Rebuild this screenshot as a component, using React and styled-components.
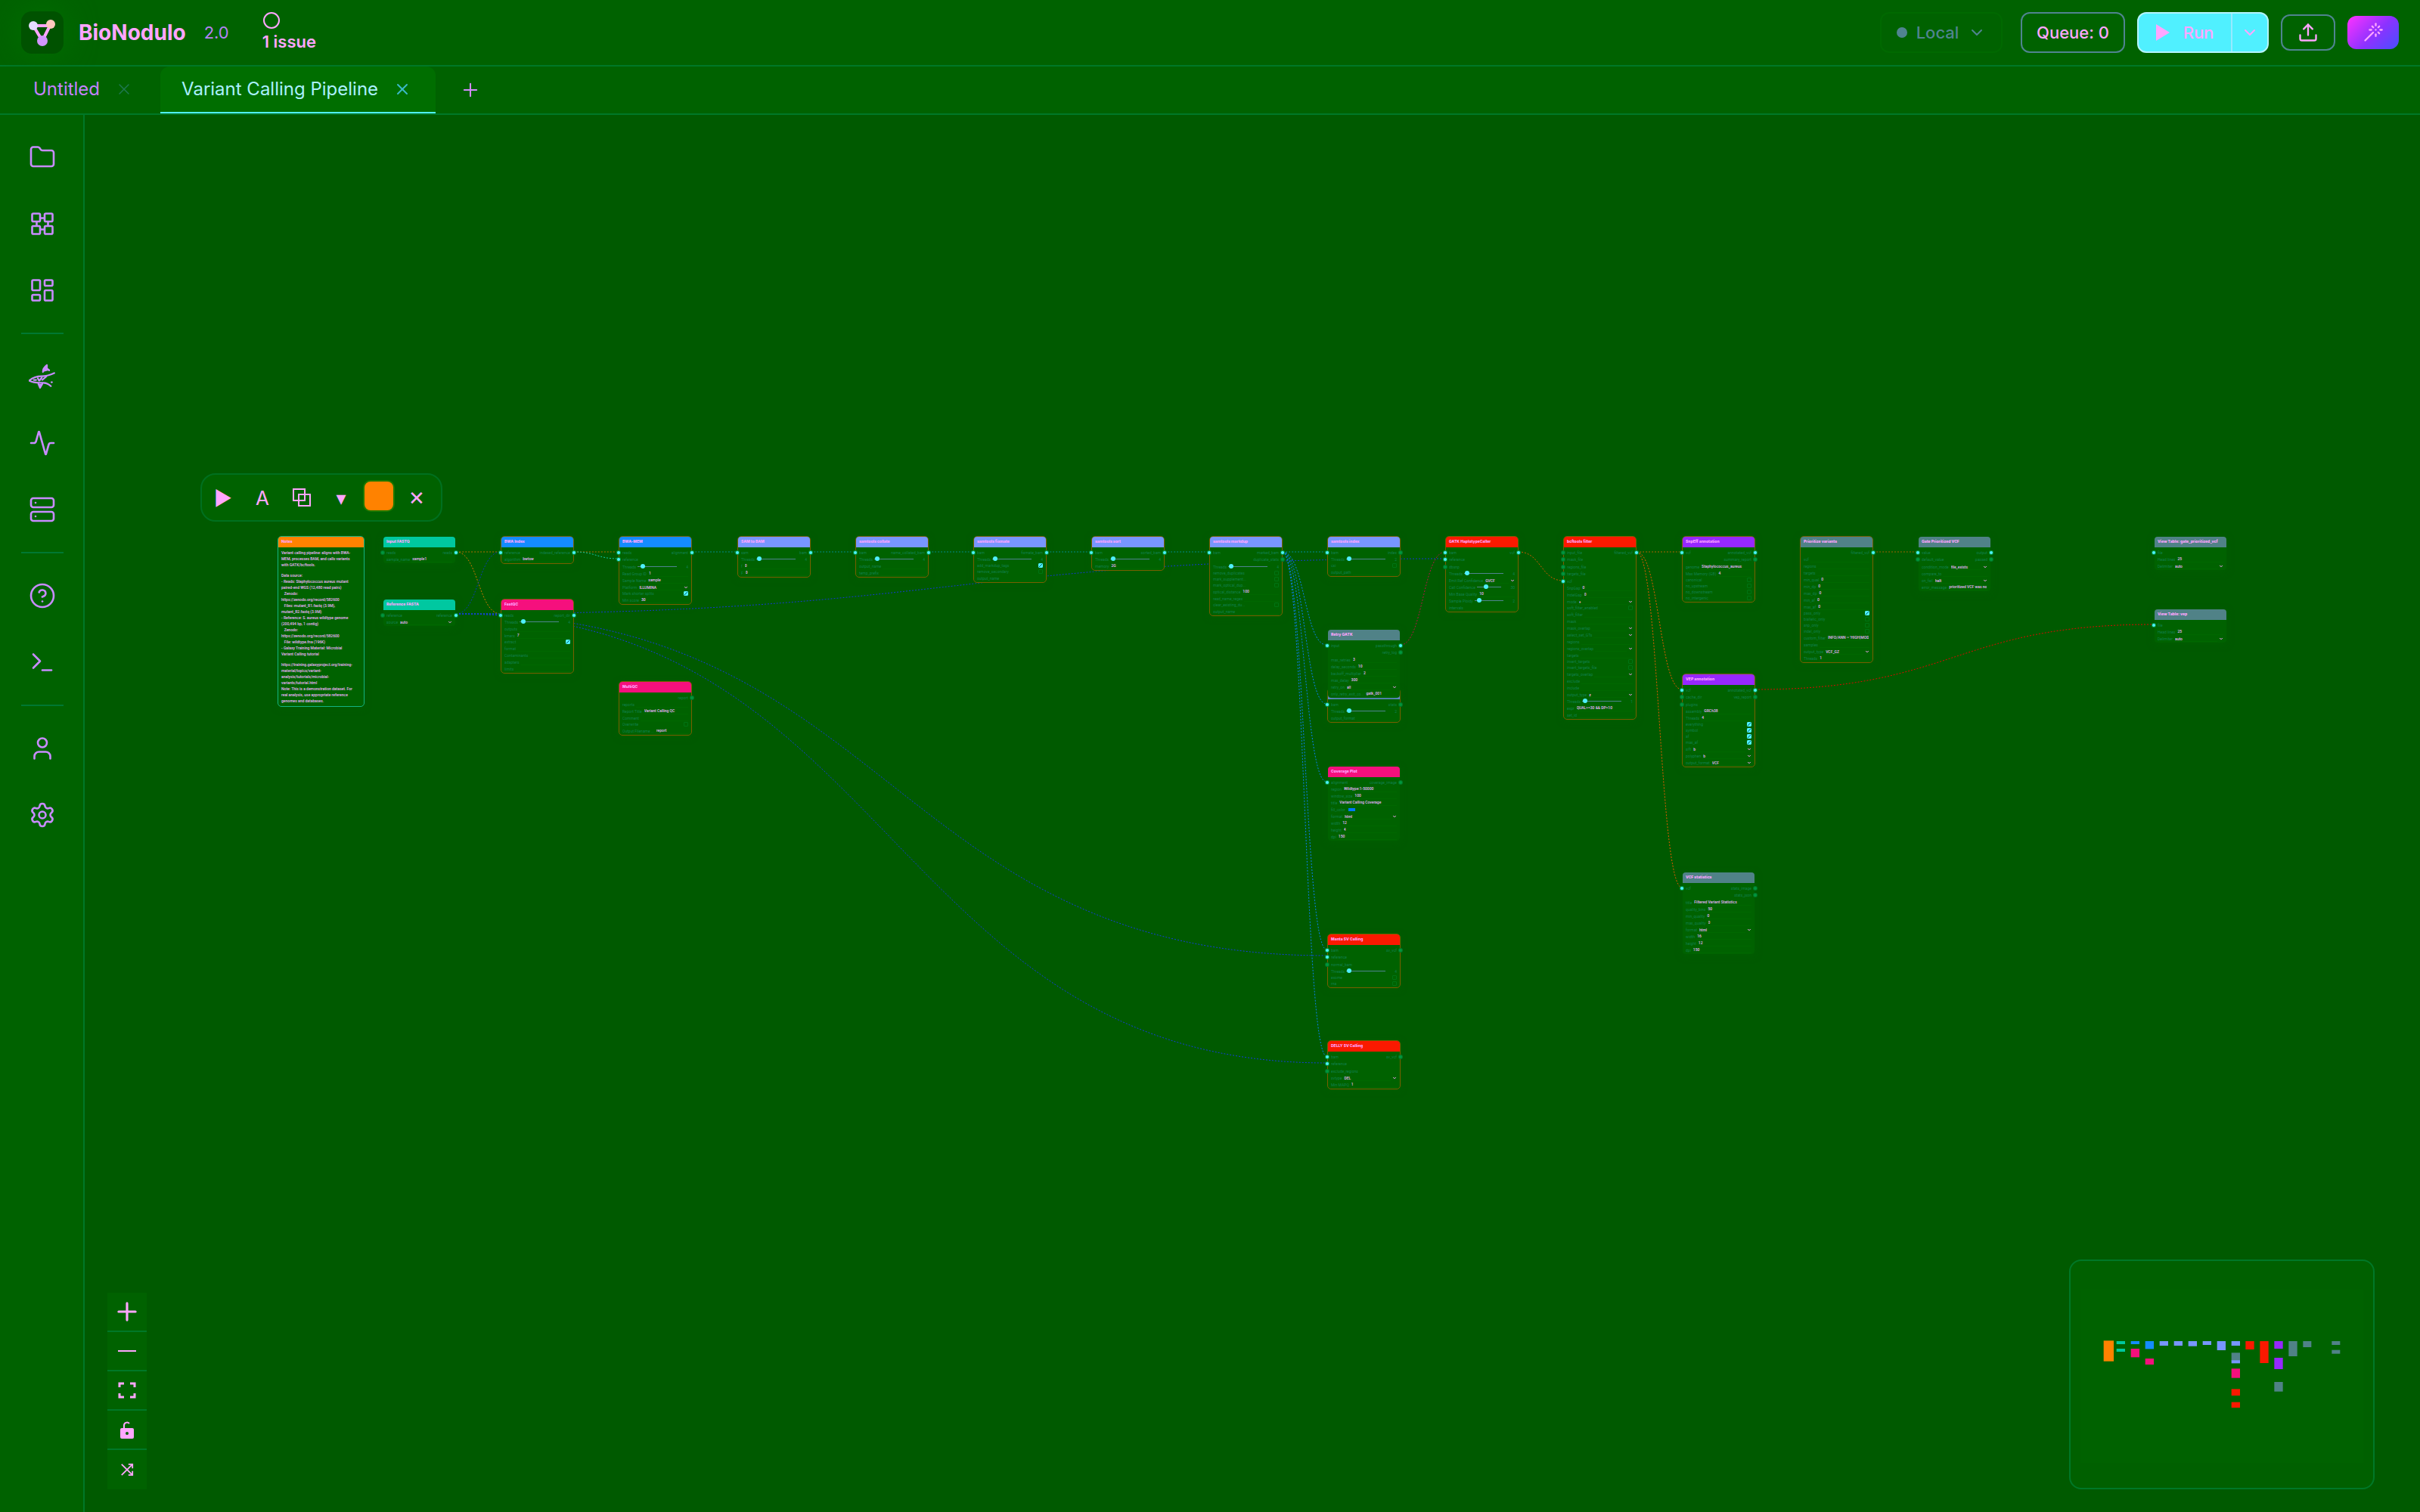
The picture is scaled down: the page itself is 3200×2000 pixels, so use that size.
import styled, { createGlobalStyle } from "styled-components";
import {
  Activity,
  ChevronDown,
  Circle,
  CircleHelp,
  Folder,
  LayoutDashboard,
  Plus,
  Server,
  Settings,
  Terminal,
  Upload,
  User,
  Wand,
  X,
} from "lucide-react";

const GlobalStyle = createGlobalStyle`
  * {
    box-sizing: border-box;
  }
  body {
    margin: 0;
    background: #005a00;
    font-family: Inter, "Liberation Sans", sans-serif;
    color: #ffa6ff;
  }
  button, input, select {
    font: inherit;
    color: inherit;
    margin: 0;
    padding: 0;
    border: 0;
    background: none;
  }
  button {
    display: flex;
    align-items: center;
    justify-content: center;
    cursor: pointer;
  }
`;

const Page = styled.div`
  display: flex;
  flex-direction: column;
  min-height: 100vh;
`;

const Header = styled.header`
  display: flex;
  align-items: center;
  height: 88px;
  padding: 0 28px;
  background: #006200;
  border-bottom: 2px solid #007828;
`;

const LogoTile = styled.div`
  width: 56px;
  height: 56px;
  border-radius: 14px;
  background: #005200;
  box-shadow: 0 0 40px #007000;
`;

const Brand = styled.h1`
  margin: 0 0 0 20px;
  font-size: 28px;
  font-weight: 700;
  line-height: 36px;
`;

const Version = styled.span`
  margin-left: 24px;
  font-size: 22px;
  line-height: 28px;
  color: #b482f5;
`;

const Issues = styled.button`
  && {
    flex-direction: column;
    align-items: flex-start;
    margin-left: 44px;
  }
  font-size: 22px;
  font-weight: 600;
  line-height: 32px;
`;

const Actions = styled.div`
  display: flex;
  align-items: center;
  gap: 16px;
  margin-left: auto;
  font-size: 22px;
  font-weight: 500;
`;

const EnvButton = styled.button`
  gap: 12px;
  width: 162px;
  height: 54px;
  margin-right: 8px;
  border: 2px solid #006900 !important;
  border-radius: 12px;
  color: #508490 !important;
`;

const StatusDot = styled.span`
  width: 14px;
  height: 14px;
  border-radius: 50%;
  background: #508490;
`;

const OutlineButton = styled.button`
  width: ${(p) => p.$w}px;
  height: ${(p) => p.$h}px;
  border: 2px solid #508490 !important;
  border-radius: 12px;
`;

const RunGroup = styled.div`
  display: flex;
  width: 174px;
  height: 54px;
  border: 2px solid #b4f4ff;
  border-radius: 12px;
  background: #50f0ff;
`;

const RunButton = styled.button`
  flex: 1;
  gap: 18px;
`;

const RunMenu = styled.button`
  width: 48px;
  border-left: 2px solid #96eaff !important;
`;

const MagicButton = styled.button`
  width: 68px;
  height: 44px;
  border-radius: 12px;
  background: linear-gradient(135deg, #ff32ff, #8c32ff 55%, #4650ff) !important;
`;

const TabBar = styled.nav`
  display: flex;
  gap: 4px;
  height: 64px;
  padding-left: 16px;
  background: #006200;
  border-bottom: 2px solid #007828;
`;

const Tab = styled.div`
  display: flex;
  align-items: center;
  gap: 16px;
  padding: 0 28px;
  font-size: 24px;
  border-radius: 12px 12px 0 0;
  border-bottom: 2px solid ${(p) => (p.$active ? "#50f0ff" : "transparent")};
  background: ${(p) => (p.$active ? "#006e00" : "none")};
  color: ${(p) => (p.$active ? "#aaf0ff" : "#c382ff")};
`;

const TabLink = styled.a`
  color: inherit;
  text-decoration: none;
  line-height: 32px;
`;

const TabClose = styled.button`
  width: 32px;
  height: 32px;
  color: ${(p) => (p.$active ? "#3cb9c8" : "#1e7850")} !important;
`;

const AddTab = styled.button`
  width: 48px;
  margin-left: 18px;
  color: #d28cff !important;
`;

const Workspace = styled.div`
  display: flex;
  flex: 1;
`;

const Sidebar = styled.aside`
  display: flex;
  flex-direction: column;
  align-items: center;
  gap: 8px;
  width: 112px;
  padding: 16px 0 0 2px;
  background: #006200;
  border-right: 2px solid #007828;
`;

const SideButton = styled.button`
  width: 80px;
  height: 80px;
  color: #c88cff !important;
`;

const SideRule = styled.hr`
  width: 56px;
  height: 2px;
  margin: 8px 0;
  border: 0;
  background: #007832;
`;

const Canvas = styled.main`
  position: relative;
  flex: 1;
  overflow: hidden;
  background: #005a00;
`;

const Edges = styled.svg`
  position: absolute;
  top: 0;
  left: 0;
  width: 100%;
  height: 100%;
  fill: none;
  stroke-dasharray: 2 2;
`;

const NodeToolbar = styled.div`
  position: absolute;
  left: 153px;
  top: 474px;
  display: flex;
  align-items: center;
  gap: 4px;
  height: 64px;
  padding: 0 8px 0 4px;
  border: 2px solid #007020;
  border-radius: 20px;
  background: #006200;
`;

const ToolButton = styled.button`
  width: 48px;
  height: 48px;
  font-size: 26px;
  font-family: Inter, "DejaVu Sans", sans-serif !important;
`;

const SwatchButton = styled.button`
  width: 44px;
  height: 48px;
  padding-bottom: 4px !important;
`;

const Swatch = styled.span`
  width: 42px;
  height: 42px;
  border: 2px solid #1e7800;
  border-radius: 10px;
  background: #ff8200;
`;

const NodeCard = styled.section`
  position: absolute;
  width: ${(p) => (p.$wide ? 115 : 97)}px;
  border: 1px solid ${(p) => p.$border};
  border-radius: 5px;
  background: #006200 padding-box;
  box-shadow: 0 2px 8px #00600080;
`;

const NodeTitle = styled.h2`
  height: 14px;
  margin: 0;
  padding: 0 4px;
  border-radius: 4px 4px 0 0;
  background: ${(p) => p.$color};
  font-size: 5px;
  font-weight: 800;
  line-height: 13px;
  white-space: nowrap;
`;

const NodeBody = styled.div`
  padding: 2px 4px 1px;
  font-family: Roboto, sans-serif;
  font-size: 5px;
  line-height: 8px;
  color: #12804f;
`;

const NotesBody = styled(NodeBody)`
  padding: 3px 4px;
  font-weight: 500;
  color: #f0b4ff;
`;

const NotesText = styled.p`
  margin: 0 0 6px;
  white-space: pre;
  &:last-child {
    margin: 0;
  }
`;

const PortRow = styled.div`
  position: relative;
  display: flex;
  align-items: center;
  justify-content: space-between;
  height: 9px;
  &:nth-child(even) {
    height: 10px;
  }
`;

const Handle = styled.i`
  position: absolute;
  ${(p) => p.$side}: -7px;
  width: 4px;
  height: 4px;
  border-radius: 50%;
  background: ${(p) => (p.$on ? "#50f0ff" : "#00963c")};
  box-shadow: 0 0 0 1px ${(p) => (p.$on ? "#00963c" : "#007828")};
`;

const FieldRow = styled.label`
  display: flex;
  align-items: center;
  gap: 2px;
  height: ${(p) => (p.$kind === "check" ? 8 : 9)}px;
  white-space: nowrap;
`;

const TextField = styled.input`
  flex: 1;
  min-width: 0;
  width: 0;
  height: 8px;
  padding: 0 1px !important;
  border-bottom: 1px solid #006800 !important;
  font-weight: 500 !important;
  color: #e8b4ff !important;
`;

const SelectField = styled.select`
  flex: 1;
  min-width: 0;
  height: 8px;
  padding: 0 1px !important;
  appearance: none;
  border-bottom: 1px solid #006800 !important;
  font-weight: 500 !important;
  color: #e8b4ff !important;
`;

const CheckField = styled.input`
  appearance: none;
  width: 6px;
  height: 6px;
  margin-left: auto !important;
  border: 1px solid #007414 !important;
  border-radius: 1px;
  &:checked {
    border-color: #50f0ff !important;
    background: linear-gradient(135deg, #50f0ff 40%, #006478 40% 60%, #50f0ff 60%);
  }
`;

const RangeField = styled.input`
  flex: 1;
  min-width: 0;
  height: 6px;
  margin-right: 10px !important;
  appearance: none;
  &::-webkit-slider-runnable-track {
    height: 1px;
    background: #508490;
  }
  &::-webkit-slider-thumb {
    appearance: none;
    width: 6px;
    height: 6px;
    margin-top: -3px;
    border-radius: 50%;
    background: #50f0ff;
  }
`;

const ColorChip = styled.span`
  width: 9px;
  height: 4px;
  margin-left: 2px;
  background: #0078ff;
`;

const ZoomControls = styled.div`
  position: absolute;
  left: 30px;
  bottom: 30px;
  display: flex;
  flex-direction: column;
  width: 52px;
  background: #006200;
`;

const ZoomButton = styled.button`
  height: 52px;
  &:not(:last-child) {
    border-bottom: 2px solid #007828;
  }
`;

const MiniMap = styled.div`
  position: absolute;
  right: 60px;
  bottom: 30px;
  width: 404px;
  height: 304px;
  border: 2px solid #007828;
  border-radius: 16px;
  background: #006000;
`;

const C = {
  orange: "#ff8200",
  teal: "#00c8a0",
  blue: "#148cff",
  pink: "#f5107d",
  peri: "#7896ff",
  slate: "#508287",
  red: "#fa1900",
  violet: "#9628ff",
};

const text = (label, value = "") => ({ kind: "text", label, value });
const select = (label, value = "") => ({ kind: "select", label, value });
const check = (label, value = false) => ({ kind: "check", label, value });
const range = (label, value, num) => ({ kind: "range", label, value, num });

// ports are [input, output]; a leading * marks a connected handle
const nodes = [
  { x: 394, y: 557, title: "Input FASTQ", color: C.teal, ports: [["reads", "*reads"]], fields: [text("sample_name", "sample1")], plain: true },
  { x: 394, y: 640, title: "Reference FASTA", color: C.teal, ports: [["reference", "*reference"]], fields: [select("source", "auto")], plain: true },
  { x: 550, y: 557, title: "BWA Index", color: C.blue, ports: [["*reference", "*indexed_reference"]], fields: [text("algorithm", "bwtsw")] },
  {
    x: 550, y: 640, title: "FastQC", color: C.pink, ports: [["*reads", "*report_dir"]],
    fields: [range("Threads", 3, "4"), text("outputs"), text("kmers", "7"), check("extract", true), text("format"), text("Contaminants"), text("adapters"), text("limits")],
  },
  {
    x: 706, y: 557, title: "BWA-MEM", color: C.blue, ports: [["*reads", "*alignment"], ["*reference", ""]],
    fields: [range("Threads", 9, "4"), text("Read Group ID", "1"), text("Sample Name", "sample"), select("Platform", "ILLUMINA"), check("Mark shorter splits", true), text("Min score", "30")],
  },
  {
    x: 706, y: 749, title: "MultiQC", color: C.pink, ports: [["", "report"]],
    fields: [text("reports"), text("Report Title", "Variant Calling QC"), text("Comment"), check("Overwrite"), text("Output Filename ...", "report")],
  },
  { x: 863, y: 557, title: "SAM to BAM", color: C.peri, ports: [["*sam", "*bam"]], fields: [range("Threads", 2, "4"), text("f", "0"), text("F", "0")] },
  { x: 1019, y: 557, title: "samtools collate", color: C.peri, ports: [["*bam", "*name_collated_bam"]], fields: [range("Threads", 2, "4"), text("output_name"), text("temp_prefix")] },
  {
    x: 1175, y: 557, title: "samtools fixmate", color: C.peri, ports: [["*bam", "*fixmate_bam"]],
    fields: [range("Threads", 2, "4"), check("add_markdup_tags", true), check("remove_secondary"), text("output_name")],
  },
  { x: 1331, y: 557, title: "samtools sort", color: C.peri, ports: [["*bam", "*sorted_bam"]], fields: [range("Threads", 2, "4"), text("memory", "2G")] },
  {
    x: 1487, y: 557, title: "samtools markdup", color: C.peri, ports: [["*bam", "*marked_bam"], ["", "duplicate_stats"]],
    fields: [range("Threads", 2, "4"), check("remove_duplicates"), check("mark_supplement..."), check("mark_optical_dup..."), text("optical_distance", "100"), text("read_name_regex"), check("clear_existing_du..."), text("output_name")],
  },
  {
    x: 1643, y: 557, title: "samtools index", color: C.peri, ports: [["*bam", "index"]],
    fields: [range("Threads", 2, "2"), check("csi"), text("output_path")],
  },
  { x: 1643, y: 758, title: "samtools flagstat", color: C.peri, ports: [["*bam", "stats"]], fields: [range("Threads", 2, "2"), text("output_format")] },
  {
    x: 1643, y: 680, title: "Retry GATK", color: C.slate, plain: true, ports: [["*input", "*passthrough"], ["", "retry_log"]],
    fields: [text("max_retries", "3"), text("delay_seconds", "10"), text("backoff_multiplier", "2"), text("max_delay", "300"), select("retry_on", "all"), text("only_retry_exit_co...", "gatk_001")],
  },
  {
    x: 1643, y: 861, title: "Coverage Plot", color: C.pink, plain: true, ports: [["*alignment", "coverage_image"]],
    fields: [text("region", "Wildtype:1-50000"), text("window_size", "100"), text("title", "Variant Calling Coverage"), { kind: "color", label: "fill_color" }, select("format", "html"), text("width", "12"), text("height", "4"), text("dpi", "150")],
  },
  {
    x: 1643, y: 1083, title: "Manta SV Calling", color: C.red, ports: [["*bam", "sv_vcf"], ["*reference", ""], ["normal_bam", ""]],
    fields: [range("Threads", 2, "4"), check("exome"), check("rna")],
  },
  {
    x: 1643, y: 1224, title: "DELLY SV Calling", color: C.red, ports: [["*bam", "sv_vcf"], ["*reference", ""], ["exclude_regions", ""]],
    fields: [select("svtype", "DEL"), text("Min MAPQ", "1")],
  },
  {
    x: 1799, y: 557, title: "GATK HaplotypeCaller", color: C.red, ports: [["*bam", "*vcf"], ["*reference", ""], ["dbsnp", ""]],
    fields: [range("Threads", 2, "4"), select("Emit Ref Confidence", "GVCF"), range("Call Confidence", 36, "30"), text("Min Base Quality", "10"), range("Sample Ploidy", 11, "2"), text("intervals")],
  },
  {
    x: 1955, y: 557, title: "bcftools filter", color: C.red,
    ports: [["input_file", "*filtered_vcf"], ["mask_file", ""], ["regions_file", ""], ["targets_file", ""], ["*vcf", ""]],
    fields: [
      text("SnpGap", "0"), text("IndelGap", "0"), select("mode", "+"), check("soft_filter_enabled"), text("soft_filter"), text("mask"),
      select("mask_overlap"), select("select_set_GTs"), text("regions"), select("regions_overlap"), text("targets"), check("invert_targets"), check("invert_targets_file"),
      select("targets_overlap"), text("exclude"), text("include"), select("output_type", "z"), range("Threads", 2, "1"), text("expr", "QUAL>=30 && DP>10"), text("set_id"),
    ],
  },
  {
    x: 2112, y: 557, title: "SnpEff annotation", color: C.violet, ports: [["*vcf", "*annotated_vcf"], ["", "summary_report"]],
    fields: [text("genome", "Staphylococcus_aureus"), text("Max Memory (GB)", "4"), check("canonical"), check("no_upstream"), check("no_downstream"), check("no_intergenic")],
  },
  {
    x: 2112, y: 739, title: "VEP annotation", color: C.violet, ports: [["*vcf", "*annotated_vcf"], ["cache_dir", "vep_report"], ["plugins", ""]],
    fields: [text("assembly", "GRCh38"), text("Threads", "4"), check("everything", true), check("symbol", true), check("af", true), check("max_af", true), select("sift", "b"), select("polyphen", "b"), select("output_format", "VCF")],
  },
  {
    x: 2112, y: 1001, title: "VCF statistics", color: C.slate, plain: true, ports: [["*vcf", "stats_image"], ["", "stats_json"]],
    fields: [text("title", "Filtered Variant Statistics"), text("quality_bins", "50"), text("min_quality", "0"), text("max_quality", "0"), select("format", "html"), text("width", "16"), text("height", "12"), text("dpi", "150")],
  },
  {
    x: 2268, y: 557, title: "Prioritize variants", color: C.slate, ports: [["", "*filtered_vcf"]],
    fields: [
      text("vcf"), text("regions"), text("targets"), text("min_qual", "0"), text("min_dp", "0"), text("max_dp", "0"), text("min_af", "0"), text("max_af", "0"),
      check("pass_only", true), check("biallelic_only"), check("snp_only"), check("indel_only"), text("custom_filter", "INFO/ANN ~ 'HIGH|MODE"), text("samples"), select("output_type", "VCF_GZ"), text("Threads", "1"),
    ],
  },
  {
    x: 2424, y: 557, title: "Gate Prioritized VCF", color: C.slate, plain: true, ports: [["*value", "*output"], ["default_value", "passed"]],
    fields: [select("condition_mode", "file_exists"), text("compare_to"), select("on_fail", "halt"), text("error_message", "prioritized VCF was not p")],
  },
  { x: 2736, y: 557, title: "View Table: gate_prioritized_vcf", color: C.slate, plain: true, ports: [["*file", ""]], fields: [text("Head lines", "25"), select("Delimiter", "auto")] },
  { x: 2736, y: 653, title: "View Table: vep", color: C.slate, plain: true, ports: [["*file", ""]], fields: [text("Head lines", "25"), select("Delimiter", "auto")] },
];

const notes = [
  `Variant calling pipeline: aligns with BWA-
MEM, processes BAM, and calls variants
with GATK/bcftools.`,
  `Data source:
- Reads: Staphylococcus aureus mutant
paired-end WGS (12,480 read pairs)
   Zenodo:
https://zenodo.org/record/582600
   Files: mutant_R1.fastq (3.9M),
mutant_R2.fastq (3.9M)
- Reference: S. aureus wildtype genome
(200,494 bp, 1 contig)
   Zenodo:
https://zenodo.org/record/582600
   File: wildtype.fna (196K)
- Galaxy Training Material: Microbial
Variant Calling tutorial`,
  `https://training.galaxyproject.org/training-
material/topics/variant-
analysis/tutorials/microbial-
variants/tutorial.html
Note: This is a demonstration dataset. For
real analysis, use appropriate reference
genomes and databases.`,
];

// x1, y1, x2, y2, colour
const edges = [
  [491, 578, 706, 578, "#b46e00"],
  [491, 578, 550, 660, "#d27800"],
  [491, 660, 550, 578, "#0a3cb4"],
  [491, 660, 1799, 587, "#1438d2"],
  [491, 660, 550, 660, "#1e50ff"],
  [491, 660, 1642, 1112, "#143cdc"],
  [491, 660, 1642, 1254, "#143cdc"],
  [647, 578, 706, 587, "#14c8aa"],
  [803, 578, 863, 578, "#008c8c"],
  [960, 578, 1019, 578, "#008c8c"],
  [1116, 578, 1175, 578, "#008c8c"],
  [1272, 578, 1331, 578, "#008c8c"],
  [1428, 578, 1487, 578, "#008c8c"],
  [1584, 578, 1643, 578, "#008ca0"],
  [1584, 578, 1642, 701, "#0a82f0"],
  [1584, 578, 1642, 779, "#0a82f0"],
  [1584, 578, 1642, 882, "#0a82f0"],
  [1584, 578, 1642, 1104, "#0a82f0"],
  [1584, 578, 1642, 1245, "#0a82f0"],
  [1740, 701, 1799, 578, "#b41446"],
  [1896, 578, 1955, 616, "#d25a00"],
  [2052, 578, 2112, 578, "#b46400"],
  [2052, 578, 2112, 760, "#e65a00"],
  [2052, 578, 2112, 1022, "#e65a00"],
  [2209, 760, 2736, 674, "#dc0a00"],
  [2365, 578, 2424, 578, "#a06400"],
];

const miniNodes = [
  [131, 316, 40, 82, C.orange],
  [182, 318, 34, 12, C.teal], [182, 348, 34, 12, C.teal],
  [239, 318, 34, 12, C.blue], [239, 348, 34, 34, C.pink],
  [296, 318, 34, 31, C.blue], [296, 387, 34, 24, C.pink],
  [353, 318, 34, 18, C.peri], [410, 318, 34, 18, C.peri], [467, 318, 34, 20, C.peri], [524, 318, 34, 15, C.peri],
  [581, 318, 34, 36, C.peri], [638, 318, 34, 18, C.peri],
  [638, 364, 34, 32, C.slate], [638, 394, 34, 12, C.peri],
  [638, 427, 34, 37, C.pink], [638, 508, 34, 26, C.red], [638, 560, 34, 22, C.red],
  [694, 318, 34, 33, C.red], [751, 318, 34, 87, C.red],
  [808, 318, 34, 30, C.violet], [808, 384, 34, 45, C.violet], [808, 480, 34, 38, C.slate],
  [865, 318, 34, 60, C.slate], [922, 318, 33, 24, C.slate],
  [1036, 318, 33, 15, C.slate], [1036, 353, 33, 15, C.slate],
];

const Logo = () => (
  <svg width="56" height="56" viewBox="0 0 56 56">
    <path d="M16 19h22L28 39z" fill="none" stroke="#ffa6ff" strokeWidth="4" />
    <circle cx="16" cy="19" r="6" fill="#e6dcff" />
    <circle cx="39" cy="17" r="6" fill="#ffc8be" />
    <circle cx="28" cy="39" r="7" fill="#d296ff" />
  </svg>
);

const ModulesIcon = () => (
  <svg width="36" height="36" viewBox="0 0 24 24" fill="none" stroke="currentColor" strokeWidth="1.75">
    <rect x="3" y="3" width="7" height="7" rx="1" />
    <rect x="14" y="3" width="7" height="7" rx="1" />
    <rect x="3" y="14" width="7" height="7" rx="1" />
    <rect x="14" y="14" width="7" height="7" rx="1" />
    <path d="M10 7h4M10 17h4M7 10v4M17 10v4" />
  </svg>
);

const WhaleIcon = () => (
  <svg width="36" height="36" viewBox="0 0 24 24" fill="none" stroke="currentColor" strokeWidth="1.5" strokeLinecap="round" strokeLinejoin="round">
    <path d="M0.500 15.500c3-2.500 7-3.800 11-3.800 4 .1 7-.8 11-2.700" />
    <path d="M0.500 15.700c4 2.300 8 1.800 12.500 1.800 3 0 5 1.500 6.500 3" />
    <path d="M12.500 8c0-2.500 1.500-4.500 3.500-6v3l2 1.500M8.500 18.500l1.500 3.500 2-3.500" fill="currentColor" />
    <path d="M4.500 15h2M8 13.500l1 2M11.500 13l-2 2.500M15.500 12l-3.500 3M20 17h.5" />
  </svg>
);

const CopyIcon = () => (
  <svg width="24" height="24" viewBox="0 0 24 24" fill="none" stroke="currentColor" strokeWidth="2">
    <path d="M1 1h15v15H1zM8 8h15v15H8z" />
  </svg>
);

const FitIcon = () => (
  <svg width="24" height="24" viewBox="0 0 24 24" fill="none" stroke="currentColor" strokeWidth="3">
    <path d="M2 8V3h6M16 3h6v5M22 16v5h-6M8 21H2v-5" />
  </svg>
);

const LockIcon = () => (
  <svg width="20" height="24" viewBox="0 0 20 24" fill="none" stroke="currentColor" strokeWidth="2">
    <rect x="1" y="10" width="18" height="14" rx="2" fill="currentColor" stroke="none" />
    <path d="M6 12V7a4 4 0 0 1 7-3" />
    <circle cx="10" cy="17" r="2" fill="#006200" stroke="none" />
  </svg>
);

const ArrangeIcon = () => (
  <svg width="18" height="18" viewBox="0 0 20 20" fill="none" stroke="currentColor" strokeWidth="2">
    <path d="M2 2l16 16M18 2L2 18M12 2h6v6M12 18h6v-6" />
  </svg>
);

const Port = ({ name, side }) => {
  const on = name.startsWith("*");
  return (
    <span>
      {name && <Handle $side={side} $on={on} style={{ top: 3 }} />}
      {name.replace("*", "")}
    </span>
  );
};

const Field = ({ kind, label, value, num }) => (
  <FieldRow $kind={kind}>
    <span>{label}</span>
    {kind === "text" && <TextField defaultValue={value} />}
    {kind === "check" && <CheckField type="checkbox" defaultChecked={value} />}
    {kind === "color" && <ColorChip />}
    {kind === "range" && (
      <>
        <RangeField type="range" min="0" max="100" defaultValue={value} />
        <span>{num}</span>
      </>
    )}
    {kind === "select" && (
      <>
        <SelectField defaultValue={value}>
          <option>{value}</option>
        </SelectField>
        <ChevronDown size={6} strokeWidth={4} color="#ffa6ff" />
      </>
    )}
  </FieldRow>
);

const FlowNode = ({ x, y, title, color, plain, ports, fields }) => (
  <NodeCard $border={plain ? "transparent" : "#785f00"} style={{ left: x, top: y }}>
    <NodeTitle $color={color}>{title}</NodeTitle>
    <NodeBody>
      <div>
        {ports.map(([left, right], i) => (
          <PortRow key={i}>
            <Port name={left} side="left" />
            <Port name={right} side="right" />
          </PortRow>
        ))}
      </div>
      {fields.map((field) => (
        <Field key={field.label} {...field} />
      ))}
    </NodeBody>
  </NodeCard>
);

const App = () => {
  return (
    <Page>
      <GlobalStyle />
      <Header>
        <LogoTile>
          <Logo />
        </LogoTile>
        <Brand>BioNodulo</Brand>
        <Version>2.0</Version>
        <Issues>
          <Circle size={24} />
          1 issue
        </Issues>
        <Actions>
          <EnvButton disabled>
            <StatusDot />
            Local
            <ChevronDown size={24} />
          </EnvButton>
          <OutlineButton $w={138} $h={54}>Queue: 0</OutlineButton>
          <RunGroup>
            <RunButton>
              <svg width="18" height="22" viewBox="0 0 18 22" fill="currentColor">
                <path d="M0 0l18 11L0 22z" />
              </svg>
              Run
            </RunButton>
            <RunMenu aria-label="Run options">
              <ChevronDown size={24} />
            </RunMenu>
          </RunGroup>
          <OutlineButton $w={72} $h={48} aria-label="Export">
            <Upload size={28} />
          </OutlineButton>
          <MagicButton aria-label="Assistant">
            <Wand size={28} />
          </MagicButton>
        </Actions>
      </Header>

      <TabBar>
        <Tab>
          <TabLink href="#untitled">Untitled</TabLink>
          <TabClose aria-label="Close Untitled">
            <X size={24} strokeWidth={1.5} />
          </TabClose>
        </Tab>
        <Tab $active>
          <TabLink href="#variant">Variant Calling Pipeline</TabLink>
          <TabClose $active aria-label="Close Variant Calling Pipeline">
            <X size={24} />
          </TabClose>
        </Tab>
        <AddTab aria-label="New tab">
          <Plus size={28} strokeWidth={1.75} />
        </AddTab>
      </TabBar>

      <Workspace>
        <Sidebar>
          <SideButton aria-label="Files"><Folder size={36} strokeWidth={1.75} /></SideButton>
          <SideButton aria-label="Modules"><ModulesIcon /></SideButton>
          <SideButton aria-label="Templates"><LayoutDashboard size={36} strokeWidth={1.75} /></SideButton>
          <SideRule />
          <SideButton aria-label="Whale"><WhaleIcon /></SideButton>
          <SideButton aria-label="Activity"><Activity size={36} strokeWidth={1.75} /></SideButton>
          <SideButton aria-label="Servers"><Server size={36} strokeWidth={1.75} /></SideButton>
          <SideRule />
          <SideButton aria-label="Help"><CircleHelp size={36} strokeWidth={1.75} /></SideButton>
          <SideButton aria-label="Terminal"><Terminal size={36} strokeWidth={1.75} /></SideButton>
          <SideRule />
          <SideButton aria-label="Account"><User size={36} strokeWidth={1.75} /></SideButton>
          <SideButton aria-label="Settings"><Settings size={36} strokeWidth={1.75} /></SideButton>
        </Sidebar>

        <Canvas>
          <Edges>
            {edges.map(([x1, y1, x2, y2, color], i) => {
              const mid = (x1 + x2) / 2;
              return <path key={i} d={`M${x1} ${y1}C${mid} ${y1} ${mid} ${y2} ${x2} ${y2}`} stroke={color} />;
            })}
          </Edges>

          <NodeToolbar>
            <ToolButton>▶</ToolButton>
            <ToolButton>A</ToolButton>
            <ToolButton aria-label="Duplicate"><CopyIcon /></ToolButton>
            <ToolButton>▾</ToolButton>
            <SwatchButton aria-label="Node colour"><Swatch /></SwatchButton>
            <ToolButton>✕</ToolButton>
          </NodeToolbar>

          <NodeCard $wide $border="#14b482" style={{ left: 255, top: 557 }}>
            <NodeTitle $color={C.orange}>Notes</NodeTitle>
            <NotesBody>
              {notes.map((part) => (
                <NotesText key={part}>{part}</NotesText>
              ))}
            </NotesBody>
          </NodeCard>
          {nodes.map((node) => (
            <FlowNode key={node.title} {...node} />
          ))}

          <ZoomControls>
            <ZoomButton aria-label="Zoom in"><Plus size={38} strokeWidth={2} /></ZoomButton>
            <ZoomButton aria-label="Zoom out">
              <svg width="24" height="2"><rect width="24" height="2" fill="currentColor" /></svg>
            </ZoomButton>
            <ZoomButton aria-label="Fit view"><FitIcon /></ZoomButton>
            <ZoomButton aria-label="Lock"><LockIcon /></ZoomButton>
            <ZoomButton aria-label="Arrange"><ArrangeIcon /></ZoomButton>
          </ZoomControls>

          <MiniMap>
            <svg width="100%" height="100%" viewBox="0 0 1200 900">
              <rect x="38" y="114" width="1124" height="687" fill="#006200" />
              {miniNodes.map(([x, y, w, h, color], i) => (
                <rect key={i} x={x} y={y} width={w} height={h} fill={color} />
              ))}
            </svg>
          </MiniMap>
        </Canvas>
      </Workspace>
    </Page>
  );
};

export default App;
